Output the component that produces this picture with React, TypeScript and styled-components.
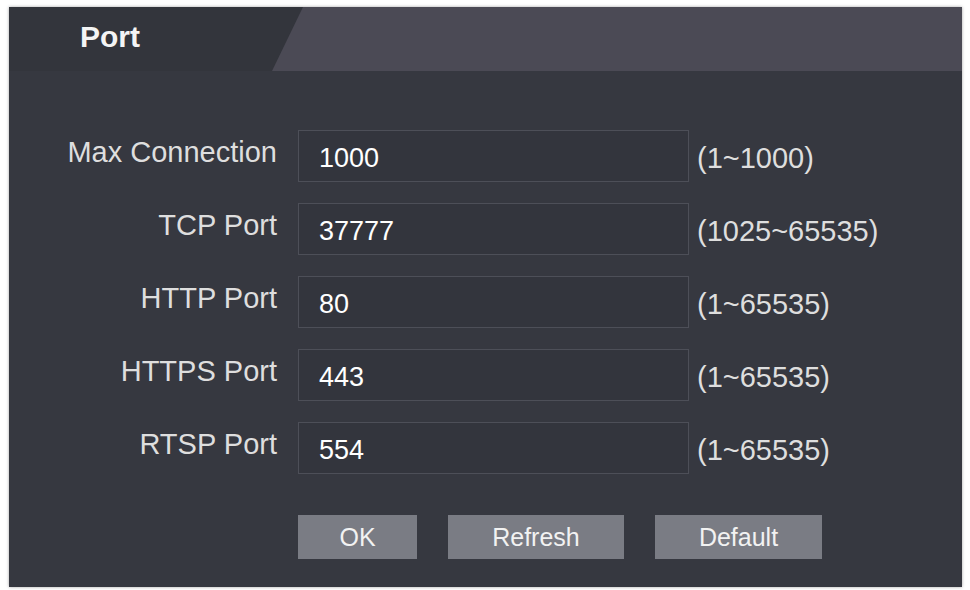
import React from 'react';
import styled, { createGlobalStyle } from 'styled-components';

const GlobalStyle = createGlobalStyle`
  html, body {
    margin: 0;
    padding: 0;
    background: #ffffff;
  }
  body {
    font-family: "Liberation Sans", Arial, sans-serif;
  }
`;

const Page = styled.div`
  padding: 7px 8px 3px 9px;
`;

const Panel = styled.div`
  width: 953px;
  height: 580px;
  background: #363840;
  box-shadow: 0 0 3px rgba(0, 0, 0, 0.35);
  display: flex;
  flex-direction: column;
`;

const Header = styled.div`
  height: 64px;
  background: #4b4a55;
  display: flex;
`;

const Tab = styled.div`
  width: 294px;
  background: #33353c;
  clip-path: polygon(0 0, 294px 0, 263px 100%, 0 100%);
  display: flex;
  align-items: center;
  padding-left: 71px;
  padding-bottom: 4px;
  box-sizing: border-box;
  color: #f4f4f4;
  font-weight: bold;
  font-size: 30px;
`;

const Form = styled.div`
  display: grid;
  grid-template-columns: 289px 391px auto;
  row-gap: 21px;
  padding-top: 59px;
`;

const Label = styled.div`
  color: #dedede;
  font-size: 29px;
  text-align: right;
  padding-top: 7px;
  padding-right: 21px;
  line-height: 30px;
`;

const Field = styled.div`
  height: 52px;
  box-sizing: border-box;
  border: 1px solid #4d4f58;
  background: #33353d;
  color: #ffffff;
  font-size: 27px;
  display: flex;
  align-items: center;
  padding: 4px 0 0 20px;
`;

const Range = styled.div`
  color: #dedede;
  font-size: 29px;
  display: flex;
  align-items: center;
  padding: 4px 0 0 8px;
`;

const Buttons = styled.div`
  display: flex;
  gap: 31px;
  padding: 41px 0 0 289px;
`;

const Button = styled.button<{ w: number }>`
  width: ${p => p.w}px;
  height: 44px;
  background: #7a7c84;
  border: none;
  color: #f2f2f2;
  font-family: "Liberation Sans", Arial, sans-serif;
  font-size: 25px;
  padding: 0;
`;

const rows = [
  { label: 'Max Connection', value: '1000', range: '(1~1000)' },
  { label: 'TCP Port', value: '37777', range: '(1025~65535)' },
  { label: 'HTTP Port', value: '80', range: '(1~65535)' },
  { label: 'HTTPS Port', value: '443', range: '(1~65535)' },
  { label: 'RTSP Port', value: '554', range: '(1~65535)' },
];

const App: React.FC = () => (
  <Page>
    <GlobalStyle />
    <Panel>
      <Header>
        <Tab>Port</Tab>
      </Header>
      <Form>
        {rows.map(r => (
          <React.Fragment key={r.label}>
            <Label>{r.label}</Label>
            <Field>{r.value}</Field>
            <Range>{r.range}</Range>
          </React.Fragment>
        ))}
      </Form>
      <Buttons>
        <Button w={119}>OK</Button>
        <Button w={176}>Refresh</Button>
        <Button w={167}>Default</Button>
      </Buttons>
    </Panel>
  </Page>
);

export default App;
